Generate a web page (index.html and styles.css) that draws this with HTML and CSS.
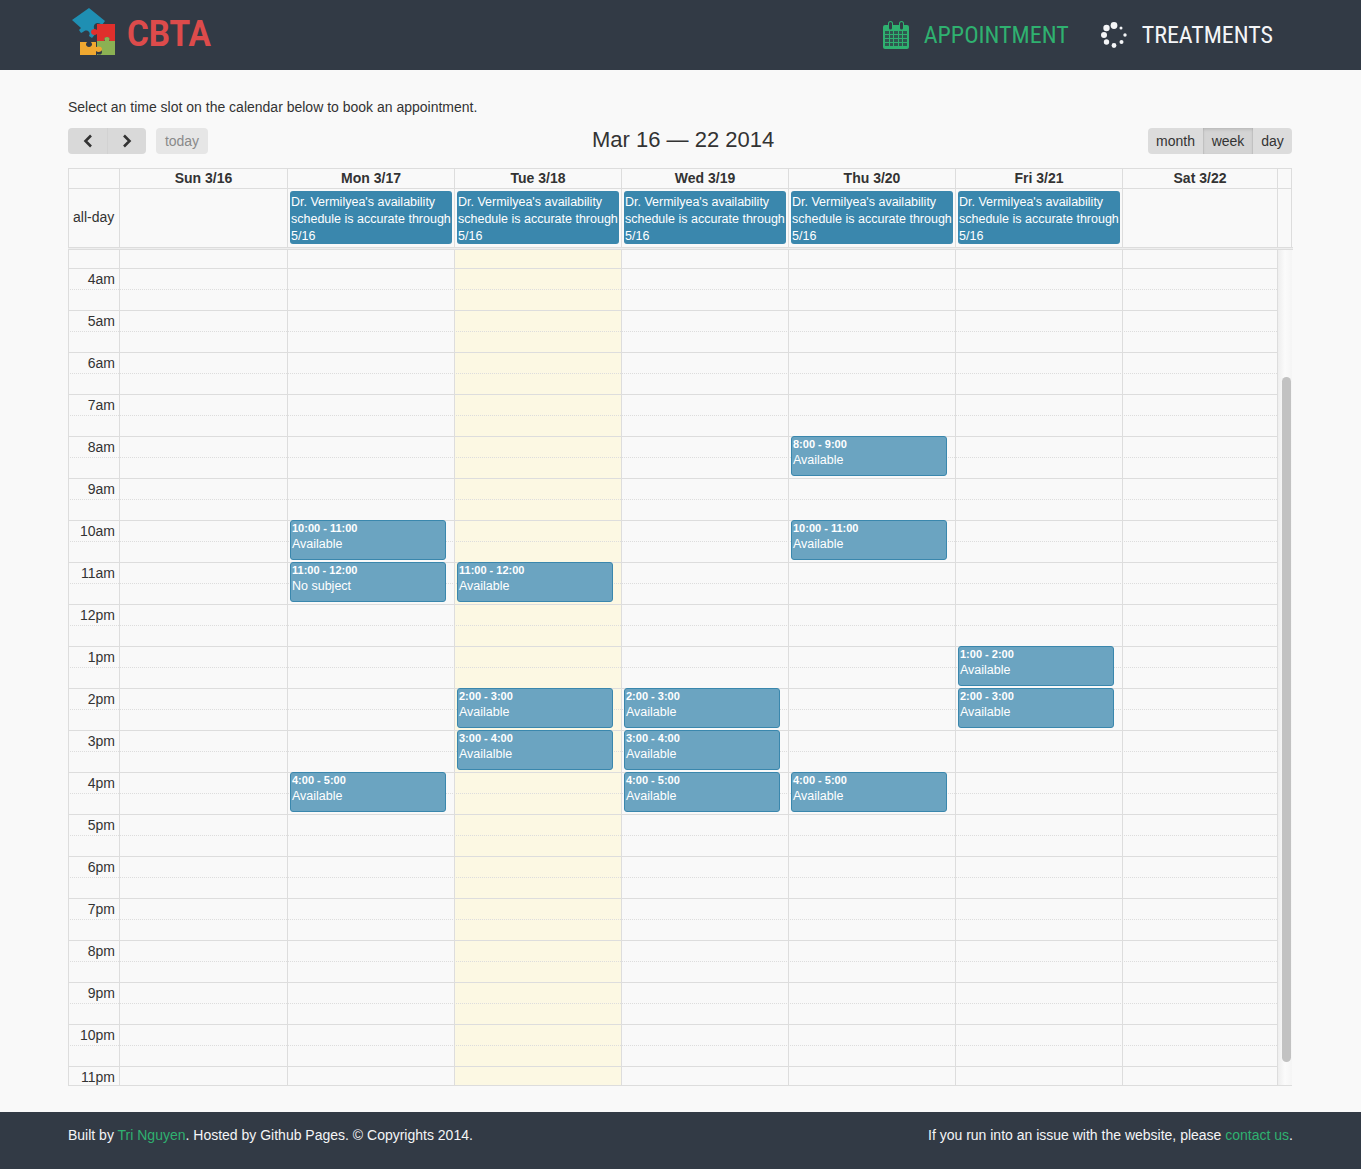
FILE: index.html
```html
<!DOCTYPE html>
<html lang="en">
<head>
    <meta charset="UTF-8">
    <title>CBTA</title>
    <link rel="stylesheet" href="styles.css">
</head>
<body>
    <header class="site-header">
        <a class="logo">
            <svg class="logo-mark" width="50" height="50" viewBox="0 0 50 50">
                <path fill="#1f8fb3" d="M21 3l16 13-3 4c-2-2-5-3-7-1-2 2-1 5 0 6l2 2-5 6-3-2c1-2 1-4-1-5-2-1-4 0-5 1l-2 1-2-3 2-2-9-8z"/>
                <path fill="#e02f2c" d="M29 19h18v18h-6c1-2 1-5-2-5s-3 3-2 5h-8v-8c-2 2-6 1-6-2s4-4 6-2z"/>
                <path fill="#8bb153" d="M29 37h8c-1-2-1-4 2-4s3 2 2 4h6v18H29v-5c2 1 5 1 5-2s-3-3-5-2z" transform="translate(0 -1)"/>
                <path fill="#f0a830" d="M12 37h7c-2 2-1 5 2 5s4-3 2-5h5v5c2-1 6-1 6 2s-4 4-6 2v8H12z"/>
            </svg>
            <span class="logo-text">CBTA</span>
        </a>
        <nav class="nav">
            <a class="nav-link nav-link-active">
                <svg class="nav-icon" width="26" height="28" viewBox="0 0 26 28">
                    <path fill="#2fb170" d="M2 4h3V2.500a2.500 2.500 0 0 1 5 0V4h6V2.500a2.500 2.500 0 0 1 5 0V4h3a2 2 0 0 1 2 2v20a2 2 0 0 1-2 2H2a2 2 0 0 1-2-2V6a2 2 0 0 1 2-2z"/>
                    <path fill="#323a45" d="M6 2.500a1.500 1.500 0 0 1 3 0V7a1.500 1.500 0 0 1-3 0zM17 2.500a1.500 1.500 0 0 1 3 0V7a1.500 1.500 0 0 1-3 0z"/>
                    <path fill="#323a45" d="M2 10h4v3H2zM7 10h3v3H7zM11 10h4v3h-4zM16 10h3v3h-3zM20 10h4v3h-4zM2 14h4v3H2zM7 14h3v3H7zM11 14h4v3h-4zM16 14h3v3h-3zM20 14h4v3h-4zM2 18h4v3H2zM7 18h3v3H7zM11 18h4v3h-4zM16 18h3v3h-3zM20 18h4v3h-4zM2 22h4v3H2zM7 22h3v3H7zM11 22h4v3h-4zM16 22h3v3h-3zM20 22h4v3h-4z" opacity=".75"/>
                </svg>
                <span class="nav-text">APPOINTMENT</span>
            </a>
            <a class="nav-link">
                <svg class="nav-icon" width="26" height="26" viewBox="0 0 26 26">
                    <g fill="#f4f5f7">
                        <circle cx="13" cy="3.500" r="3.400"/>
                        <circle cx="20" cy="6" r="1.500"/>
                        <circle cx="24" cy="13" r="1.700"/>
                        <circle cx="20.500" cy="20" r="2"/>
                        <circle cx="13" cy="23.500" r="2.400"/>
                        <circle cx="5.500" cy="20" r="2.700"/>
                        <circle cx="3" cy="13" r="3"/>
                        <circle cx="5.500" cy="6" r="3.200"/>
                    </g>
                </svg>
                <span class="nav-text">TREATMENTS</span>
            </a>
        </nav>
    </header>

    <main class="content">
        <p class="intro">Select an time slot on the calendar below to book an appointment.</p>

        <div class="toolbar">
            <div class="toolbar-left">
                <div class="btn-group">
                    <button class="btn btn-arrow">
                        <svg width="10" height="14" viewBox="0 0 10 14"><path d="M8 1.500L2.500 7 8 12.500" fill="none" stroke="#333" stroke-width="2.600"/></svg>
                    </button>
                    <button class="btn btn-arrow">
                        <svg width="10" height="14" viewBox="0 0 10 14"><path d="M2 1.500L7.500 7 2 12.500" fill="none" stroke="#333" stroke-width="2.600"/></svg>
                    </button>
                </div>
                <button class="btn btn-today">today</button>
            </div>
            <h2 class="toolbar-title">Mar 16 — 22 2014</h2>
            <div class="btn-group toolbar-right">
                <button class="btn btn-month">month</button>
                <button class="btn btn-week">week</button>
                <button class="btn btn-day">day</button>
            </div>
        </div>

        <div class="calendar">
            <div class="cal-grid cal-head">
                <div class="cal-cell"></div>
                <div class="cal-cell">Sun 3/16</div>
                <div class="cal-cell">Mon 3/17</div>
                <div class="cal-cell">Tue 3/18</div>
                <div class="cal-cell">Wed 3/19</div>
                <div class="cal-cell">Thu 3/20</div>
                <div class="cal-cell">Fri 3/21</div>
                <div class="cal-cell">Sat 3/22</div>
                <div class="cal-cell cal-cell-end"></div>
            </div>

            <div class="cal-grid cal-allday">
                <div class="cal-cell cal-allday-label">all-day</div>
                <div class="cal-cell"></div>
                <div class="cal-cell"><div class="allday-event">Dr. Vermilyea's availability schedule is accurate through 5/16</div></div>
                <div class="cal-cell"><div class="allday-event">Dr. Vermilyea's availability schedule is accurate through 5/16</div></div>
                <div class="cal-cell"><div class="allday-event">Dr. Vermilyea's availability schedule is accurate through 5/16</div></div>
                <div class="cal-cell"><div class="allday-event">Dr. Vermilyea's availability schedule is accurate through 5/16</div></div>
                <div class="cal-cell"><div class="allday-event">Dr. Vermilyea's availability schedule is accurate through 5/16</div></div>
                <div class="cal-cell"></div>
                <div class="cal-cell cal-cell-end"></div>
            </div>
            <div class="cal-divider"></div>

            <div class="cal-body">
                <div class="cal-grid cal-layer">
                    <div class="cal-col"></div>
                    <div class="cal-col"></div>
                    <div class="cal-col"></div>
                    <div class="cal-col cal-col-today"></div>
                    <div class="cal-col"></div>
                    <div class="cal-col"></div>
                    <div class="cal-col"></div>
                    <div class="cal-col"></div>
                    <div class="cal-col cal-col-scroll"><div class="scroll-thumb"></div></div>
                </div>

                <div class="cal-slots">
                    <div class="slot-start"></div>
                    <div class="slot"><span class="slot-label">4am</span></div>
                    <div class="slot"><span class="slot-label">5am</span></div>
                    <div class="slot"><span class="slot-label">6am</span></div>
                    <div class="slot"><span class="slot-label">7am</span></div>
                    <div class="slot"><span class="slot-label">8am</span></div>
                    <div class="slot"><span class="slot-label">9am</span></div>
                    <div class="slot"><span class="slot-label">10am</span></div>
                    <div class="slot"><span class="slot-label">11am</span></div>
                    <div class="slot"><span class="slot-label">12pm</span></div>
                    <div class="slot"><span class="slot-label">1pm</span></div>
                    <div class="slot"><span class="slot-label">2pm</span></div>
                    <div class="slot"><span class="slot-label">3pm</span></div>
                    <div class="slot"><span class="slot-label">4pm</span></div>
                    <div class="slot"><span class="slot-label">5pm</span></div>
                    <div class="slot"><span class="slot-label">6pm</span></div>
                    <div class="slot"><span class="slot-label">7pm</span></div>
                    <div class="slot"><span class="slot-label">8pm</span></div>
                    <div class="slot"><span class="slot-label">9pm</span></div>
                    <div class="slot"><span class="slot-label">10pm</span></div>
                    <div class="slot slot-last"><span class="slot-label">11pm</span></div>
                </div>

                <div class="cal-grid cal-layer cal-events">
                    <div></div>
                    <div></div>
                    <div class="cal-day">
                        <div class="event" style="top: 270px"><div class="event-time">10:00 - 11:00</div><div class="event-title">Available</div></div>
                        <div class="event" style="top: 312px"><div class="event-time">11:00 - 12:00</div><div class="event-title">No subject</div></div>
                        <div class="event" style="top: 522px"><div class="event-time">4:00 - 5:00</div><div class="event-title">Available</div></div>
                    </div>
                    <div class="cal-day">
                        <div class="event" style="top: 312px"><div class="event-time">11:00 - 12:00</div><div class="event-title">Available</div></div>
                        <div class="event" style="top: 438px"><div class="event-time">2:00 - 3:00</div><div class="event-title">Available</div></div>
                        <div class="event" style="top: 480px"><div class="event-time">3:00 - 4:00</div><div class="event-title">Availalble</div></div>
                    </div>
                    <div class="cal-day">
                        <div class="event" style="top: 438px"><div class="event-time">2:00 - 3:00</div><div class="event-title">Available</div></div>
                        <div class="event" style="top: 480px"><div class="event-time">3:00 - 4:00</div><div class="event-title">Available</div></div>
                        <div class="event" style="top: 522px"><div class="event-time">4:00 - 5:00</div><div class="event-title">Available</div></div>
                    </div>
                    <div class="cal-day">
                        <div class="event" style="top: 186px"><div class="event-time">8:00 - 9:00</div><div class="event-title">Available</div></div>
                        <div class="event" style="top: 270px"><div class="event-time">10:00 - 11:00</div><div class="event-title">Available</div></div>
                        <div class="event" style="top: 522px"><div class="event-time">4:00 - 5:00</div><div class="event-title">Available</div></div>
                    </div>
                    <div class="cal-day">
                        <div class="event" style="top: 396px"><div class="event-time">1:00 - 2:00</div><div class="event-title">Available</div></div>
                        <div class="event" style="top: 438px"><div class="event-time">2:00 - 3:00</div><div class="event-title">Available</div></div>
                    </div>
                </div>
            </div>
        </div>
    </main>

    <footer class="site-footer">
        <p>Built by <a class="footer-link">Tri Nguyen</a>. Hosted by Github Pages. © Copyrights 2014.</p>
        <p>If you run into an issue with the website, please <a class="footer-link">contact us</a>.</p>
    </footer>
</body>
</html>
```

FILE: styles.css
```css
* {
    box-sizing: border-box;
}
body {
    margin: 0;
    font-family: "Liberation Sans", Arial, sans-serif;
    font-size: 14px;
    color: #333;
    background-color: #f9f9f9;
}
p {
    margin: 0;
}

/* header */
.site-header {
    height: 70px;
    padding: 0 88px 0 68px;
    background-color: #323a45;
    display: flex;
    justify-content: space-between;
    align-items: center;
}
.logo {
    display: flex;
    align-items: center;
    height: 70px;
}
.logo-mark {
    margin-top: -10px;
}
.logo-text {
    width: 88px;
    margin-left: 9px;
    margin-top: -3px;
    font-family: Roboto, sans-serif;
    font-size: 37px;
    font-weight: 700;
    color: #dd4b4b;
    transform: scaleX(0.9);
    transform-origin: left center;
}
.nav {
    display: flex;
    align-items: center;
    gap: 32px;
}
.nav-link {
    display: flex;
    align-items: center;
    color: #f4f5f7;
}
.nav-link-active {
    color: #2fb170;
}
.nav-icon {
    flex: none;
}
.nav-text {
    margin-left: 15px;
    font-family: Roboto, sans-serif;
    font-size: 24px;
    font-stretch: condensed;
    white-space: nowrap;
}

/* page content */
.content {
    height: 1042px;
    padding: 29px 68px 0;
}
.intro {
    line-height: 17px;
}
.toolbar {
    height: 26px;
    margin-top: 12px;
    width: 1224px;
    display: flex;
    justify-content: space-between;
    align-items: center;
    position: relative;
}
.toolbar-left {
    display: flex;
    gap: 10px;
}
.toolbar-title {
    margin: 0;
    font-size: 22px;
    font-weight: 400;
    position: absolute;
    left: 524px;
    top: -1px;
}
.btn-group {
    display: flex;
    border-radius: 4px;
    overflow: hidden;
}
.btn {
    height: 26px;
    padding: 0;
    border: none;
    font-family: inherit;
    font-size: 14px;
    color: #333;
    background-color: #dcdcdc;
}
.btn-arrow {
    width: 39px;
    display: flex;
    align-items: center;
    justify-content: center;
    background-color: #d9d9d9;
}
.btn-arrow + .btn-arrow {
    border-left: 1px solid #d2d2d2;
}
.btn-today {
    width: 52px;
    border-radius: 4px;
    color: #8a8a8a;
    background-color: #e6e6e6;
}
.btn-month {
    width: 55px;
}
.btn-week {
    width: 50px;
    background-color: #d4d4d4;
    box-shadow: inset 0 2px 3px rgba(0, 0, 0, 0.1), inset 1px 0 1px rgba(0, 0, 0, 0.06), inset -1px 0 1px rgba(0, 0, 0, 0.06);
}
.btn-day {
    width: 39px;
}

/* calendar */
.calendar {
    width: 1224px;
    margin-top: 14px;
}
.cal-grid {
    display: grid;
    grid-template-columns: 51px 168px repeat(5, 167px) 155px 15px;
}
.cal-cell {
    border-left: 1px solid #ddd;
}
.cal-cell-end {
    border-right: 1px solid #ddd;
}
.cal-head {
    height: 21px;
    border-top: 1px solid #ddd;
    border-bottom: 1px solid #ddd;
}
.cal-head .cal-cell {
    text-align: center;
    font-weight: 700;
    line-height: 19px;
}
.cal-allday {
    height: 58px;
}
.cal-allday .cal-cell {
    padding: 2px 2px 0;
}
.cal-cell.cal-allday-label {
    padding: 0 0 0 4px;
    line-height: 57px;
}
.allday-event {
    height: 53px;
    padding: 3px 1px 0;
    border-radius: 3px;
    background-color: #3a87ad;
    color: #fff;
    font-size: 12.500px;
    line-height: 17px;
}
.cal-divider {
    height: 3px;
    width: 1225px;
    border-top: 1px solid #ddd;
    border-bottom: 1px solid #ddd;
    background-color: #eee;
}
.cal-body {
    position: relative;
    height: 836px;
    border-bottom: 1px solid #ddd;
}
.cal-layer {
    position: absolute;
    top: 0;
    bottom: 0;
    left: 0;
}
.cal-col {
    border-left: 1px solid #ddd;
}
.cal-col-today {
    background-color: #fcf8e3;
}
.cal-col-scroll {
    border-left: 1px solid #ddd;
    background: linear-gradient(to right, #eee, #fbfbfb 50%, #f5f5f5);
}
.scroll-thumb {
    width: 9px;
    height: 685px;
    margin: 127px 0 0 4px;
    border-radius: 5px;
    background-color: #c2c2c2;
}
.cal-slots {
    position: relative;
    width: 1209px;
}
.slot-start {
    height: 18px;
}
.slot {
    height: 42px;
    border-top: 1px solid #ddd;
    position: relative;
}
.slot::after {
    content: "";
    position: absolute;
    left: 0;
    right: 0;
    top: 20px;
    border-top: 1px dotted #ddd;
}
.slot-last {
    height: 19px;
}
.slot-last::after {
    display: none;
}
.slot-label {
    display: block;
    width: 47px;
    text-align: right;
    line-height: 20px;
}

/* timed events */
.cal-day {
    position: relative;
}
.event {
    position: absolute;
    left: 3px;
    width: 156px;
    height: 40px;
    padding: 0 1px;
    border: 1px solid #3a87ad;
    border-radius: 3px;
    background-color: #6ba4c1;
    color: #fff;
}
.event-time {
    font-size: 11px;
    font-weight: 700;
    line-height: 14px;
}
.event-title {
    font-size: 12.500px;
    line-height: 16px;
    margin-top: 1px;
}

/* footer */
.site-footer {
    height: 57px;
    padding: 15px 68px 0;
    background-color: #323a45;
    color: #f4f5f7;
    display: flex;
    justify-content: space-between;
    line-height: 17px;
}
.footer-link {
    color: #2fb170;
}
```
